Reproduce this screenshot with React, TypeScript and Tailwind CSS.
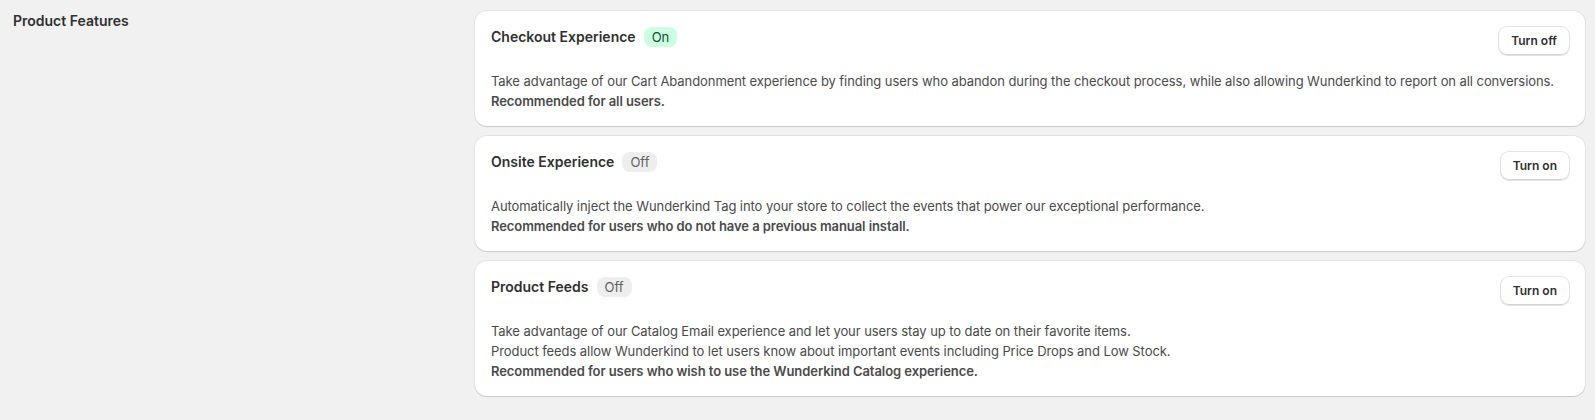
const features = [
  {
    title: "Checkout Experience",
    on: true,
    lines: [
      "Take advantage of our Cart Abandonment experience by finding users who abandon during the checkout process, while also allowing Wunderkind to report on all conversions.",
    ],
    note: "Recommended for all users.",
  },
  {
    title: "Onsite Experience",
    on: false,
    lines: [
      "Automatically inject the Wunderkind Tag into your store to collect the events that power our exceptional performance.",
    ],
    note: "Recommended for users who do not have a previous manual install.",
  },
  {
    title: "Product Feeds",
    on: false,
    lines: [
      "Take advantage of our Catalog Email experience and let your users stay up to date on their favorite items.",
      "Product feeds allow Wunderkind to let users know about important events including Price Drops and Low Stock.",
    ],
    note: "Recommended for users who wish to use the Wunderkind Catalog experience.",
  },
];

function FeatureCard({ feature }: { feature: (typeof features)[number] }) {
  return (
    <div className="rounded-xl bg-white px-4 pt-4 pb-[15px] shadow-[0_0_0_1px_rgba(0,0,0,0.05),0_1px_1px_rgba(0,0,0,0.12)]">
      <div className="flex items-start justify-between">
        <div className="flex h-5 items-center gap-2">
          <h3 className="text-[14px] font-semibold leading-5 text-[#303030]">{feature.title}</h3>
          {feature.on ? (
            <span className="rounded-lg bg-[#cdfee1] px-2 text-[13px] leading-5 text-[#0c5132]">On</span>
          ) : (
            <span className="rounded-lg bg-[#eeeeee] px-2 text-[13px] leading-5 text-[#616161]">Off</span>
          )}
        </div>
        <button className="h-7 rounded-lg bg-white px-3 text-[12px] font-semibold text-[#303030] shadow-[0_0_0_1px_#e3e3e3,inset_0_-1px_0_#d4d4d4]">
          {feature.on ? "Turn off" : "Turn on"}
        </button>
      </div>
      <div className="mt-4 text-[13px] leading-5 tracking-[-0.07px] text-[#4a4a4a]">
        {feature.lines.map((line) => (
          <p key={line}>{line}</p>
        ))}
        <p className="font-semibold">{feature.note}</p>
      </div>
    </div>
  );
}

export default function App() {
  return (
    <div
      className="min-h-[420px] bg-[#f1f1f1] pt-[11px] pr-[10px] pl-[13px]"
      style={{ fontFamily: "Inter, 'Noto Sans', sans-serif" }}
    >
      <div className="flex">
        <div className="w-[462px] shrink-0">
          <h2 className="text-[14px] font-semibold leading-5 text-[#303030]">Product Features</h2>
        </div>
        <div className="flex flex-1 flex-col gap-2.5">
          {features.map((f) => (
            <FeatureCard key={f.title} feature={f} />
          ))}
        </div>
      </div>
    </div>
  );
}
